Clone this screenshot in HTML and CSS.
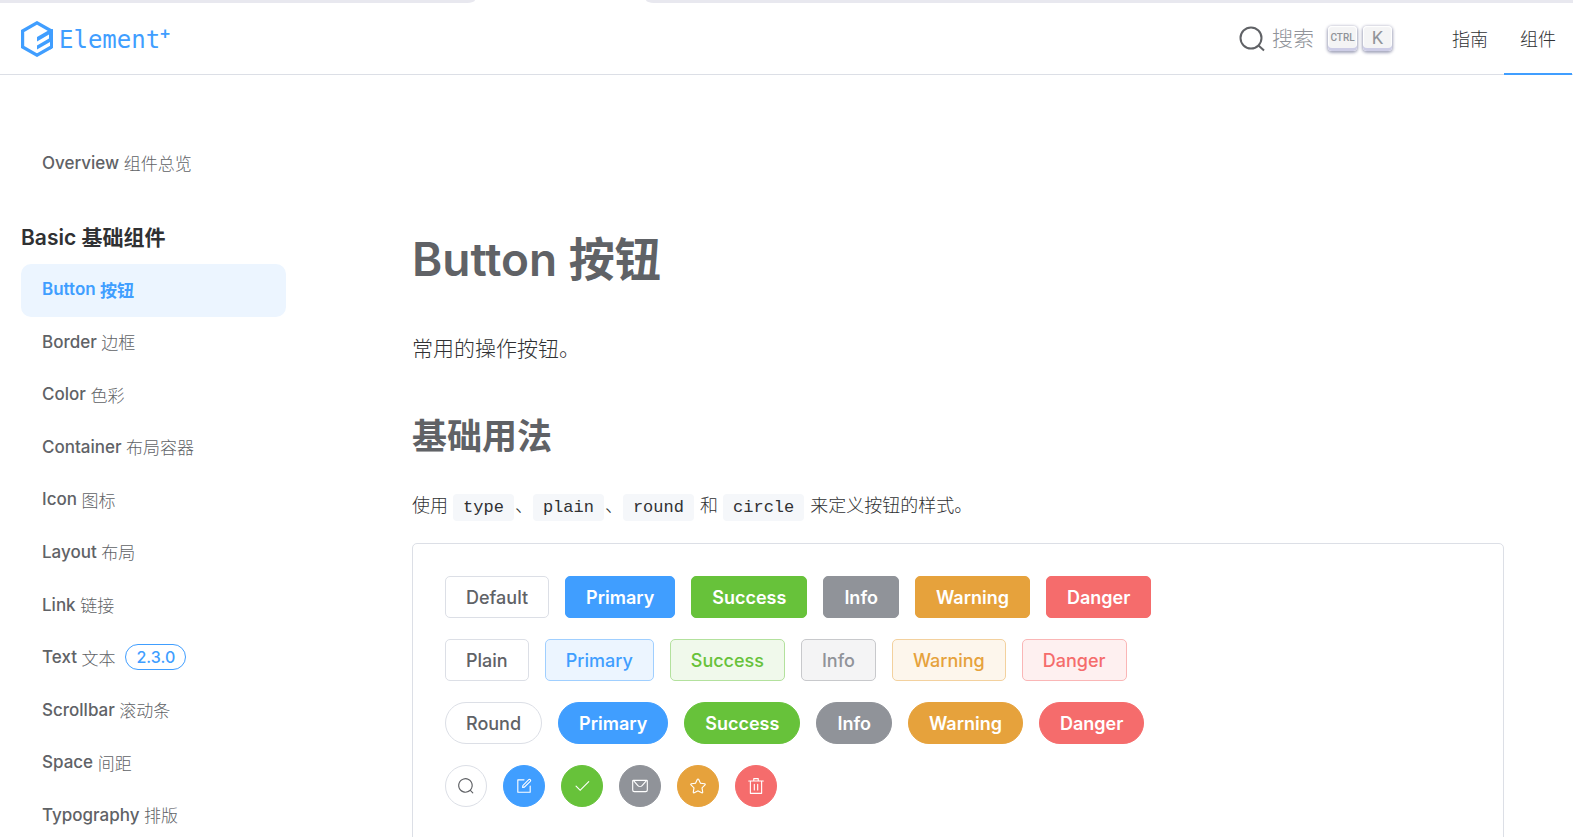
FILE: index.html
```html
<!DOCTYPE html>
<html lang="zh-CN">
<head>
  <meta charset="UTF-8">
  <title>Button 按钮 | Element Plus</title>
  <link rel="stylesheet" href="styles.css">
</head>
<body>
  <div class="tab-strip"><span class="left"></span><span class="right"></span></div>
  <header>
    <a class="logo" href="#">
      <svg viewBox="0 0 32 36" width="32" height="36" fill="none" stroke="currentColor" stroke-width="3.200">
        <path d="M30.400 10 L16 1.800 1.600 10 V26 L16 34.200 30.400 26"/>
        <path fill="currentColor" stroke="none" d="M32 8v19l-3 1.500v-7.500l-13 7.500v-4l12-7v-4l-12 7v-4.500l13-7.500z"/>
      </svg>
      <span class="logo-text">Element<sup>+</sup></span>
    </a>
    <button class="search" type="button">
      <svg viewBox="0 0 26 26" width="26" height="26" fill="none" stroke="#606266" stroke-width="2"><circle cx="12" cy="12" r="10.500"/><path d="M19.500 19.500l5.500 5"/></svg>
      <span class="search-text">搜索</span>
      <kbd class="ctrl">CTRL</kbd>
      <kbd>K</kbd>
    </button>
    <nav>
      <a href="#">指南</a>
      <a href="#" class="current">组件</a>
    </nav>
  </header>
  <div class="layout">
    <aside>
      <a class="overview" href="#">Overview <span class="zh">组件总览</span></a>
      <h2>Basic 基础组件</h2>
      <ul>
        <li><a class="active" href="#">Button <span class="zh">按钮</span></a></li>
        <li><a href="#">Border <span class="zh">边框</span></a></li>
        <li><a href="#">Color <span class="zh">色彩</span></a></li>
        <li><a href="#">Container <span class="zh">布局容器</span></a></li>
        <li><a href="#">Icon <span class="zh">图标</span></a></li>
        <li><a href="#">Layout <span class="zh">布局</span></a></li>
        <li><a href="#">Link <span class="zh">链接</span></a></li>
        <li><a href="#">Text <span class="zh">文本</span><span class="tag">2.3.0</span></a></li>
        <li><a href="#">Scrollbar <span class="zh">滚动条</span></a></li>
        <li><a href="#">Space <span class="zh">间距</span></a></li>
        <li><a href="#">Typography <span class="zh">排版</span></a></li>
      </ul>
    </aside>
    <main>
      <h1>Button <span class="zh">按钮</span></h1>
      <p class="intro">常用的操作按钮。</p>
      <h2>基础用法</h2>
      <p class="desc">使用 <code>type</code>、<code>plain</code>、<code>round</code> 和 <code>circle</code> 来定义按钮的样式。</p>
      <div class="demo">
        <div class="row">
          <button class="btn">Default</button>
          <button class="btn primary">Primary</button>
          <button class="btn success">Success</button>
          <button class="btn info">Info</button>
          <button class="btn warning">Warning</button>
          <button class="btn danger">Danger</button>
        </div>
        <div class="row plain">
          <button class="btn">Plain</button>
          <button class="btn primary">Primary</button>
          <button class="btn success">Success</button>
          <button class="btn info">Info</button>
          <button class="btn warning">Warning</button>
          <button class="btn danger">Danger</button>
        </div>
        <div class="row round">
          <button class="btn">Round</button>
          <button class="btn primary">Primary</button>
          <button class="btn success">Success</button>
          <button class="btn info">Info</button>
          <button class="btn warning">Warning</button>
          <button class="btn danger">Danger</button>
        </div>
        <div class="row circle">
          <button class="btn" aria-label="search"><svg viewBox="0 0 1024 1024"><path d="m795.904 750.720 124.992 124.928a32 32 0 0 1-45.248 45.248L750.656 795.904a416 416 0 1 1 45.248-45.248zM480 832a352 352 0 1 0 0-704 352 352 0 0 0 0 704z"/></svg></button>
          <button class="btn primary" aria-label="edit"><svg viewBox="0 0 1024 1024"><path d="M832 512a32 32 0 1 1 64 0v352a32 32 0 0 1-32 32H160a32 32 0 0 1-32-32V160a32 32 0 0 1 32-32h352a32 32 0 0 1 0 64H192v640h640V512z"/><path d="m469.952 554.240 52.800-7.552L847.104 222.400a32 32 0 1 0-45.248-45.248L477.440 501.440l-7.552 52.800zm422.400-422.400a96 96 0 0 1 0 135.808l-331.840 331.840a32 32 0 0 1-18.112 9.088L436.800 623.680a32 32 0 0 1-36.224-36.224l15.104-105.600a32 32 0 0 1 9.024-18.112l331.904-331.840a96 96 0 0 1 135.744 0z"/></svg></button>
          <button class="btn success" aria-label="check"><svg viewBox="0 0 1024 1024"><path d="M406.656 706.944 195.840 496.256a32 32 0 1 0-45.248 45.248l256 256 512-512a32 32 0 0 0-45.248-45.248L406.592 706.944z"/></svg></button>
          <button class="btn info" aria-label="message"><svg viewBox="0 0 1024 1024"><path d="M128 224v512a64 64 0 0 0 64 64h640a64 64 0 0 0 64-64V224H128zm0-64h768a64 64 0 0 1 64 64v512a128 128 0 0 1-128 128H192A128 128 0 0 1 64 736V224a64 64 0 0 1 64-64z"/><path d="M904 224 656.512 506.880a192 192 0 0 1-289.024 0L120 224h784zm-698.944 0 210.560 240.704a128 128 0 0 0 192.704 0L818.944 224H205.056z"/></svg></button>
          <button class="btn warning" aria-label="star"><svg viewBox="0 0 1024 1024"><path d="m512 747.840 228.160 119.936a6.400 6.400 0 0 0 9.280-6.720l-43.520-254.080 184.512-179.904a6.400 6.400 0 0 0-3.520-10.880l-255.104-37.120L517.760 147.904a6.400 6.400 0 0 0-11.520 0L392.192 379.072l-255.104 37.120a6.400 6.400 0 0 0-3.520 10.880L318.080 606.976l-43.584 254.080a6.400 6.400 0 0 0 9.280 6.720L512 747.840zM313.600 924.480a70.400 70.400 0 0 1-102.144-74.240l37.888-220.928L88.960 472.960A70.400 70.400 0 0 1 128 352.896l221.760-32.256 99.200-200.960a70.400 70.400 0 0 1 126.208 0l99.200 200.960 221.824 32.256a70.400 70.400 0 0 1 39.040 120.064L774.720 629.376l37.888 220.928a70.400 70.400 0 0 1-102.144 74.240L512 820.096l-198.400 104.320z"/></svg></button>
          <button class="btn danger" aria-label="delete"><svg viewBox="0 0 1024 1024"><path d="M160 256H96a32 32 0 0 1 0-64h256V95.936a32 32 0 0 1 32-32h256a32 32 0 0 1 32 32V192h256a32 32 0 1 1 0 64h-64v672a32 32 0 0 1-32 32H192a32 32 0 0 1-32-32V256zm448-64v-64H416v64h192zM224 896h576V256H224v640zm192-128a32 32 0 0 1-32-32V416a32 32 0 0 1 64 0v320a32 32 0 0 1-32 32zm192 0a32 32 0 0 1-32-32V416a32 32 0 0 1 64 0v320a32 32 0 0 1-32 32z"/></svg></button>
        </div>
      </div>
    </main>
  </div>
</body>
</html>
```
FILE: styles.css
```css
* {
  margin: 0;
  padding: 0;
  box-sizing: border-box;
}
body {
  display: flex;
  flex-direction: column;
  height: 100vh;
  overflow: hidden;
  font-family: Inter, "Noto Sans CJK SC", sans-serif;
  font-size: 18px;
  font-weight: 300;
  color: #303133;
  background-color: #fff;
}
a {
  color: inherit;
  text-decoration: none;
}
ul {
  list-style: none;
}
.tab-strip {
  display: flex;
  flex: none;
  justify-content: space-between;
  height: 3px;
}
.tab-strip span {
  background-color: #e8e8ef;
}
.tab-strip .left {
  width: 475px;
  border-bottom-right-radius: 8px 3px;
}
.tab-strip .right {
  width: calc(100% - 646px);
  border-bottom-left-radius: 8px 3px;
}

/* 顶部导航 */
header {
  display: flex;
  flex: none;
  align-items: center;
  height: 72px;
  padding: 0 1px 0 21px;
  border-bottom: 1px solid #dcdfe6;
}
.logo {
  display: flex;
  align-items: center;
  gap: 6px;
  color: #409eff;
}
.logo-text {
  padding-top: 2px;
  font-family: "DejaVu Sans Mono", monospace;
  font-size: 24px;
  line-height: 36px;
}
.logo-text sup {
  font-size: 16px;
  font-weight: 700;
  line-height: 1;
}
.search {
  display: flex;
  align-items: center;
  margin-left: auto;
  border: 0;
  background: none;
  font-family: inherit;
  font-weight: inherit;
}
.search-text {
  margin: 0 14px 0 7px;
  font-size: 21px;
  line-height: 28px;
  color: #909399;
}
kbd {
  width: 29px;
  height: 25px;
  margin-right: 6px;
  border-radius: 4px;
  background-color: #f4f4f5;
  box-shadow: inset 0 -3px 0 #cdcde6, inset 0 0 1px 1px #fff, 0 1px 3px 1px rgba(30, 35, 90, .4);
  font-family: Roboto, sans-serif;
  font-size: 18px;
  font-weight: 400;
  line-height: 23px;
  text-align: center;
  color: #909399;
}
kbd.ctrl {
  font-size: 10px;
  font-weight: 500;
}
nav {
  display: flex;
  align-self: stretch;
  margin-left: 38px;
}
nav a {
  height: 72px;
  padding: 2px 16px 0;
  line-height: 70px;
}
nav .current {
  border-bottom: 2px solid #409eff;
}

.layout {
  display: flex;
  flex: 1;
  min-height: 0;
}

/* 侧边栏 */
aside {
  flex: none;
  width: 307px;
  padding: 62px 21px 0;
  font-size: 17px;
  font-weight: 500;
  color: #606266;
}
aside a {
  display: flex;
  align-items: center;
  height: 100%;
  padding: 0 21px 2px;
  border-radius: 10px;
  white-space: pre;
}
aside .overview {
  height: 53px;
}
aside .zh {
  font-weight: 300;
}
aside h2 {
  margin-top: 32px;
  font-size: 21px;
  font-weight: 600;
  line-height: 31px;
  color: #303133;
}
aside ul {
  display: grid;
  grid-auto-rows: 1fr;
  height: 578px;
  margin-top: 11px;
}
aside .active {
  background-color: #ecf5ff;
  font-weight: 600;
  color: #409eff;
}
aside .active .zh {
  font-weight: 700;
}
.tag {
  height: 26px;
  margin-left: 10px;
  padding: 0 10px;
  border: 1px solid #409eff;
  border-radius: 13px;
  font-size: 16px;
  line-height: 24px;
  color: #409eff;
}

/* 正文 */
main {
  flex: 1;
  padding: 149px 69px 0 105px;
}
h1 {
  font-size: 46px;
  font-weight: 600;
  line-height: 70px;
  color: #606266;
}
h1 .zh {
  font-weight: 700;
}
.intro {
  margin-top: 39px;
  font-size: 21px;
  line-height: 32px;
}
main h2 {
  margin-top: 45px;
  font-size: 35px;
  line-height: 52px;
  color: #606266;
}
.desc {
  margin-top: 29px;
  line-height: 30px;
}
code {
  margin-right: 1px;
  padding: 4px 10px;
  border-radius: 4px;
  background-color: #f5f7fa;
  font-family: "Liberation Mono", monospace;
  font-size: 17px;
}
.demo {
  margin-top: 20px;
  padding: 32px;
  border: 1px solid #dcdfe6;
  border-radius: 5px;
}
.row {
  display: flex;
  gap: 16px;
  margin-bottom: 21px;
}
.btn {
  height: 42px;
  padding: 0 20px;
  border: 1px solid #dcdfe6;
  border-radius: 5px;
  background-color: #fff;
  font-family: inherit;
  font-size: 18px;
  font-weight: 500;
  color: #606266;
}
.btn.primary,
.btn.success,
.btn.info,
.btn.warning,
.btn.danger {
  font-weight: 600;
  color: #fff;
}
.btn.primary {
  border-color: #409eff;
  background-color: #409eff;
}
.btn.success {
  border-color: #67c23a;
  background-color: #67c23a;
}
.btn.info {
  border-color: #909399;
  background-color: #909399;
}
.btn.warning {
  border-color: #e6a23c;
  background-color: #e6a23c;
}
.btn.danger {
  border-color: #f56c6c;
  background-color: #f56c6c;
}
.plain .btn.btn {
  font-weight: 500;
}
.plain .btn.primary {
  border-color: #a0cfff;
  background-color: #ecf5ff;
  color: #409eff;
}
.plain .btn.success {
  border-color: #b3e19d;
  background-color: #f0f9eb;
  color: #67c23a;
}
.plain .btn.info {
  border-color: #c8c9cc;
  background-color: #f4f4f5;
  color: #909399;
}
.plain .btn.warning {
  border-color: #f3d19e;
  background-color: #fdf6ec;
  color: #e6a23c;
}
.plain .btn.danger {
  border-color: #fab6b6;
  background-color: #fef0f0;
  color: #f56c6c;
}
.round .btn {
  border-radius: 21px;
}
.circle .btn {
  display: flex;
  align-items: center;
  justify-content: center;
  width: 42px;
  padding: 0;
  border-radius: 50%;
}
.circle svg {
  width: 18px;
  height: 18px;
  fill: currentColor;
}
```
